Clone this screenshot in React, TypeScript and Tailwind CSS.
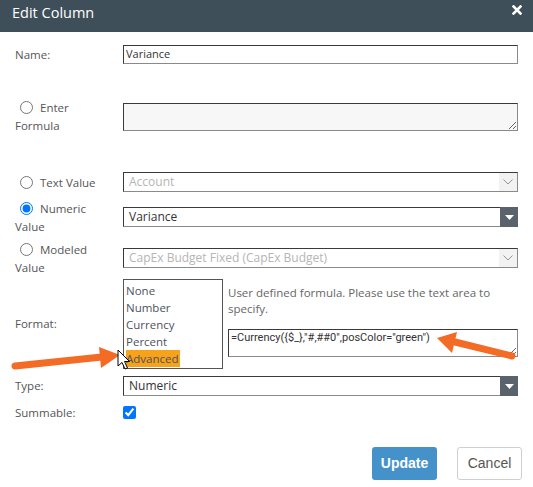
import React from "react";

function RadioLabel({ text, checked = false }: { text: string; checked?: boolean }) {
  return (
    <label className="block w-[95px] text-[11.5px] leading-[18px] text-[#555]">
      <input type="radio" name="source" defaultChecked={checked} className="mr-[7px] ml-[5px] align-[-2px]" />
      {text}
    </label>
  );
}

function Select({ value, disabled = false }: { value: string; disabled?: boolean }) {
  return (
    <div className="flex h-[20px] flex-1 border border-t-[#3a3a3a] border-l-[#3a3a3a] border-r-[#8a8a8a] border-b-[#8a8a8a] bg-white">
      <span className={`flex-1 pl-[5px] text-[12px] leading-[18px] ${disabled ? "text-[#b5b5b5]" : "text-[#333]"}`}>{value}</span>
      {disabled ? (
        <span className="flex w-[18px] items-center justify-center bg-[#f2f2f2]">
          <svg width="10" height="6" viewBox="0 0 10 6">
            <path d="M0.5 0.5 L5 5 L9.5 0.5" fill="none" stroke="#8a8a8a" strokeWidth="0.9" />
          </svg>
        </span>
      ) : (
        <span className="-my-px -mr-px flex w-[18px] items-center justify-center bg-[#5a636b]">
          <svg width="9" height="5" viewBox="0 0 9 5">
            <path d="M0 0 H9 L4.5 5 Z" fill="#fff" />
          </svg>
        </span>
      )}
    </div>
  );
}

const formats = ["None", "Number", "Currency", "Percent"];

export default function App() {
  return (
    <div className="relative h-[487px] w-[533px] overflow-hidden bg-white font-['Open_Sans',sans-serif]">
      <div className="flex h-[32px] items-start justify-between bg-[#3e4f5a] pl-[12px] pr-[11px] pt-[3px]">
        <span className="text-[14.5px] leading-[20px] text-white">Edit Column</span>
        <svg width="10" height="10" viewBox="0 0 10 10" className="mt-[2px]">
          <path d="M1.5 1.5 L8.5 8.5 M8.5 1.5 L1.5 8.5" stroke="#fff" strokeWidth="2.6" strokeLinecap="square" />
        </svg>
      </div>

      <div className="pl-[15px] pr-[15px]">
        <div className="mt-[13px] flex items-center">
          <span className="w-[108px] text-[11.5px] text-[#555]">Name:</span>
          <div className="flex h-[19px] flex-1 items-center border border-t-[#3a3a3a] border-l-[#3a3a3a] border-r-[#8a8a8a] border-b-[#8a8a8a] pl-[2px] text-[11px] text-[#333]">
            Variance
          </div>
        </div>

        <div className="mt-[35px] flex items-start">
          <div className="w-[108px]">
            <RadioLabel text="Enter Formula" />
          </div>
          <textarea
            readOnly
            className="mt-[4px] h-[28px] flex-1 border border-t-[#3a3a3a] border-l-[#3a3a3a] border-r-[#8a8a8a] border-b-[#8a8a8a] bg-[#f7f7f7]"
          />
        </div>

        <div className="mt-[37px] flex items-start">
          <div className="mt-[2px] w-[108px]">
            <RadioLabel text="Text Value" />
          </div>
          <Select value="Account" disabled />
        </div>

        <div className="mt-[8px] flex items-start">
          <div className="w-[108px]">
            <RadioLabel text="Numeric Value" checked />
          </div>
          <div className="mt-[7px] flex flex-1">
            <Select value="Variance" />
          </div>
        </div>

        <div className="mt-[5px] flex items-start">
          <div className="w-[108px]">
            <RadioLabel text="Modeled Value" />
          </div>
          <div className="mt-[7px] flex flex-1">
            <Select value="CapEx Budget Fixed (CapEx Budget)" disabled />
          </div>
        </div>

        <div className="mt-[2px] flex items-center">
          <span className="w-[108px] text-[11.5px] text-[#555]">Format:</span>
          <div className="flex flex-1 items-start gap-[5px]">
            <div className="h-[90px] w-[100px] border border-[#555] px-[2px] pt-[2px] text-[11.5px] leading-[17px] text-[#4d5260]">
              {formats.map((f) => (
                <div key={f}>{f}</div>
              ))}
              <div>
                <span className="bg-[#f7a21b] py-[1px] pr-[1px]">Advanced</span>
              </div>
            </div>
            <div className="flex flex-1 flex-col pt-[6px]">
              <p className="text-[11.5px] leading-[16px] text-[#666]">User defined formula. Please use the text area to specify.</p>
              <textarea
                readOnly
                value={'=Currency({$_},"#,##0",posColor="green")'}
                className="mt-[12px] h-[28px] border border-t-[#3a3a3a] border-l-[#3a3a3a] border-r-[#8a8a8a] border-b-[#8a8a8a] px-[2px] py-[1px] font-['Roboto',sans-serif] text-[11px] leading-[14px] text-[#333]"
              />
            </div>
          </div>
        </div>

        <div className="mt-[7px] flex items-center">
          <span className="w-[108px] text-[11.5px] text-[#555]">Type:</span>
          <Select value="Numeric" />
        </div>

        <div className="mt-[8px] flex items-center">
          <span className="w-[108px] text-[11.5px] text-[#555]">Summable:</span>
          <input type="checkbox" defaultChecked className="m-0 h-[13px] w-[13px]" />
        </div>
      </div>

      <div className="mt-[26px] flex justify-end gap-[20px] pr-[11px]">
        <button className="h-[33px] w-[65px] rounded-[3px] bg-[#4592ca] font-['Liberation_Sans',sans-serif] text-[14px] font-bold text-white">
          Update
        </button>
        <button className="h-[33px] w-[65px] rounded-[3px] border border-[#cfcfcf] bg-white font-['Liberation_Sans',sans-serif] text-[14px] text-[#555]">
          Cancel
        </button>
      </div>

      <svg className="pointer-events-none absolute left-0 top-0" width="533" height="487" viewBox="0 0 533 487">
        <line x1="15" y1="366" x2="102" y2="357" stroke="#f36b24" strokeWidth="7" strokeLinecap="round" />
        <polygon points="99,347 120,355 101,368" fill="#f36b24" />
        <line x1="512" y1="356" x2="455" y2="342" stroke="#f36b24" strokeWidth="7" strokeLinecap="round" />
        <polygon points="457,332 437,338 452,353" fill="#f36b24" />
        <path d="M118 350 L118 366 L122 362.5 L125 369 L127.5 368 L124.5 361.5 L129.5 361.5 Z" fill="#fff" stroke="#000" strokeWidth="1" strokeLinejoin="round" />
      </svg>
    </div>
  );
}
